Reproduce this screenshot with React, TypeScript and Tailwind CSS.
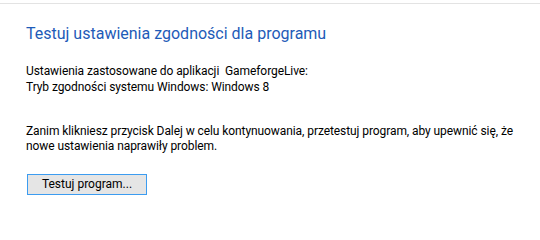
import React from 'react';

const font = { fontFamily: 'Roboto, "Liberation Sans", sans-serif' };

export default function App() {
  return (
    <div className="w-[540px] h-[214px] bg-white overflow-hidden" style={font}>
      {/* separator line under the dialog header */}
      <div className="mt-[3px] h-px bg-[#e3e3e3]" />

      <div className="pl-[26px] whitespace-nowrap">
        <h1 className="mt-[19px] text-[16px] leading-[21px] text-[#1e5bb8]">
          Testuj ustawienia zgodności dla programu
        </h1>

        <div className="mt-[19px] text-[12px] leading-[16px] tracking-[-0.08px] text-black">
          <p>Ustawienia zastosowane do aplikacji&nbsp; GameforgeLive:</p>
          <p>Tryb zgodności systemu Windows: Windows 8</p>
        </div>

        <p className="mt-[29px] text-[12px] leading-[15px] tracking-[-0.08px] text-black">
          Zanim klikniesz przycisk Dalej w celu kontynuowania, przetestuj program, aby upewnić się, że
          <br />
          nowe ustawienia naprawiły problem.
        </p>

        <button
          type="button"
          className="block mt-[20px] ml-px w-[120px] h-[21px] border border-[#3c9cf0] bg-[#e5e5e5] text-[12px] leading-[19px] text-black"
        >
          Testuj program...
        </button>
      </div>
    </div>
  );
}
